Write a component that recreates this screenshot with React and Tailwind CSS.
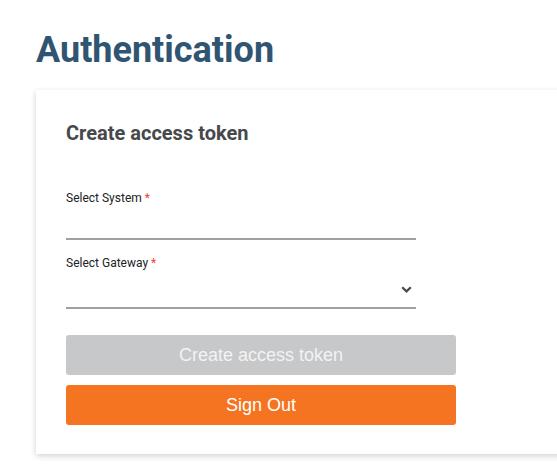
export default function App() {
  return (
    <div className="w-[557px] h-[470px] overflow-hidden bg-white pl-[36px] pt-[28px]" style={{ fontFamily: "Roboto, 'Liberation Sans', sans-serif" }}>
      <h1 className="text-[36px] leading-[44px] font-bold text-[#2f5573] m-0">Authentication</h1>
      <div className="mt-[18px] w-[600px] bg-white shadow-[0_2px_6px_rgba(0,0,0,0.18)] pt-[31px] pb-[29px] pl-[30px]">
        <h2 className="text-[20px] leading-[24px] font-bold text-[#47484c] m-0">Create access token</h2>
        <div className="mt-[45px] w-[350px]">
          <label className="block text-[12px] leading-[16px] text-[#222]">
            Select System <span className="text-[#f44336]">*</span>
          </label>
          <div className="h-[34px] border-b-2 border-[#a0a0a0]"></div>
          <label className="block mt-[15px] text-[12px] leading-[16px] text-[#222]">
            Select Gateway <span className="text-[#f44336]">*</span>
          </label>
          <div className="h-[38px] border-b-2 border-[#a0a0a0] flex items-center justify-end pr-[4px] pt-[1px]">
            <svg width="11" height="7" viewBox="0 0 11 7" fill="none">
              <path d="M1.2 1.2 L5.5 5.4 L9.8 1.2" stroke="#4a4a52" strokeWidth="2.2" />
            </svg>
          </div>
        </div>
        <div className="mt-[26px] w-[390px] flex flex-col gap-[10px]" style={{ fontFamily: "'Liberation Sans', Arial, sans-serif" }}>
          <button className="h-[40px] rounded-[3px] bg-[#c7c8c9] text-[#f3f3f3] text-[18px]">Create access token</button>
          <button className="h-[40px] rounded-[3px] bg-[#f47421] text-white text-[18px]">Sign Out</button>
        </div>
      </div>
    </div>
  );
}
